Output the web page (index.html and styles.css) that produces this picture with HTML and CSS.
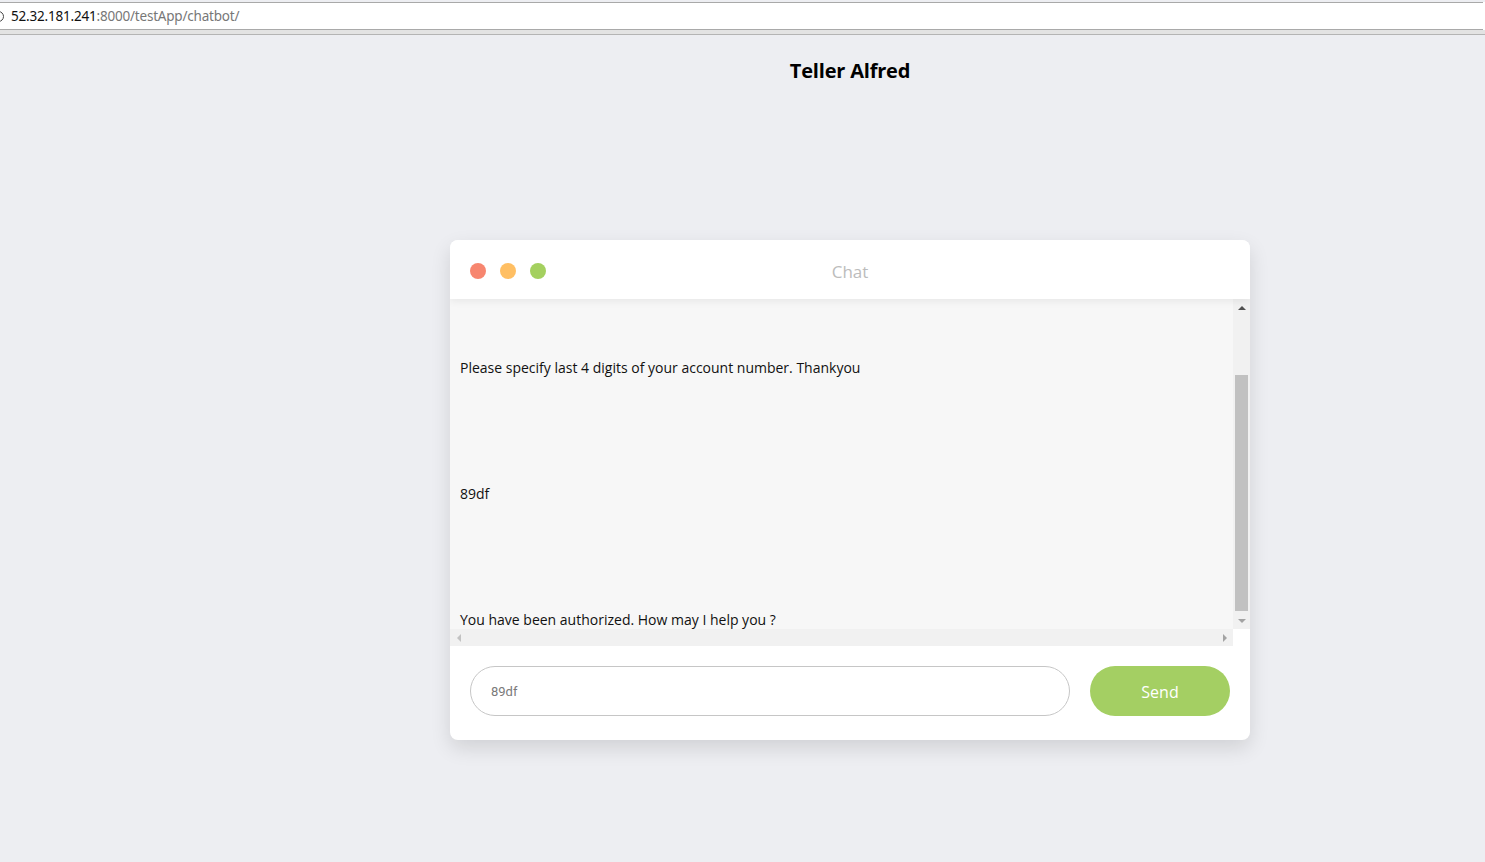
FILE: index.html
```html
<!DOCTYPE html>
<html>
<head>
<meta charset="utf-8">
<title>Teller Alfred</title>
<link rel="stylesheet" href="styles.css">
</head>
<body>
<div class="chrome">
  <div class="addr">
    <span class="info-icon"></span>
    <span class="host">52.32.181.241</span><span class="path">:8000/testApp/chatbot/</span>
  </div>
  <div class="band"></div>
</div>
<main class="page">
  <div class="column">
    <h1 class="title">Teller Alfred</h1>
    <section class="card">
      <header class="card-head">
        <div class="dots">
          <span class="dot red"></span>
          <span class="dot yellow"></span>
          <span class="dot green"></span>
        </div>
        <div class="card-title">Chat</div>
      </header>
      <div class="messages">
        <div class="list">
          <p class="msg first">Please specify last 4 digits of your account number. Thankyou</p>
          <p class="msg">89df</p>
          <p class="msg">You have been authorized. How may I help you ?</p>
        </div>
        <div class="vscroll">
          <div class="sbtn up"><span class="tri-up dark"></span></div>
          <div class="vtrack"><div class="vthumb"></div></div>
          <div class="sbtn"><span class="tri-down"></span></div>
        </div>
        <div class="hscroll">
          <div class="hbtn"><span class="tri-left"></span></div>
          <div class="htrack"></div>
          <div class="hbtn"><span class="tri-right"></span></div>
        </div>
        <div class="corner"></div>
      </div>
      <footer class="card-foot">
        <div class="input">89df</div>
        <button class="send">Send</button>
      </footer>
    </section>
  </div>
</main>
</body>
</html>
```
FILE: styles.css
```css
* { box-sizing: border-box; }
html, body { margin: 0; padding: 0; }
body {
  background: #edeef2;
  font-family: "Open Sans", "Noto Sans", sans-serif;
  width: 1485px;
  height: 862px;
  overflow: hidden;
}
.chrome { background: #fff; }
.addr {
  margin-top: 2px;
  height: 28px;
  border-top: 1px solid #a9a9a9;
  border-bottom: 1px solid #a9a9a9;
  width: 1483px;
  display: flex;
  align-items: center;
  font-family: "Noto Sans", sans-serif;
  font-size: 13.5px;
  padding-left: 11px;
  position: relative;
}
.info-icon {
  position: absolute;
  left: -7px;
  top: 8px;
  width: 11px;
  height: 11px;
  border: 1.3px solid #444;
  border-radius: 50%;
}
.host { color: #111; letter-spacing: -0.2px; }
.path { color: #777; letter-spacing: -0.2px; }
.band {
  height: 5px;
  background: #e3e3e3;
  border-bottom: 1px solid #b4b4b4;
}
.page { padding-left: 450px; }
.column { width: 800px; }
.title {
  margin: 22px 0 0;
  height: 28px;
  line-height: 28px;
  text-align: center;
  font-family: "Open Sans", sans-serif;
  font-weight: 700;
  font-size: 20px;
  color: #000;
  letter-spacing: -0.2px;
}
.card {
  margin-top: 155px;
  width: 800px;
  height: 500px;
  background: #fff;
  border-radius: 8px;
  box-shadow: 0 8px 20px rgba(0,0,0,0.12);
  display: flex;
  flex-direction: column;
  overflow: hidden;
}
.card-head {
  height: 59px;
  display: flex;
  align-items: center;
  padding-left: 20px;
  position: relative;
  box-shadow: 0 2px 8px rgba(0,0,0,0.07);
  z-index: 1;
  background: #fff;
}
.dots { display: flex; gap: 14px; margin-top: 3px; }
.dot { width: 16px; height: 16px; border-radius: 50%; display: block; }
.red { background: #f7866f; }
.yellow { background: #ffbf63; }
.green { background: #a4d05f; }
.card-title {
  position: absolute;
  left: 0; right: 0;
  top: 20px;
  text-align: center;
  color: #bcbcbc;
  font-size: 17px;
  line-height: 24px;
}
.messages {
  height: 347px;
  display: grid;
  grid-template-columns: 783px 17px;
  grid-template-rows: 330px 17px;
  background: #f7f7f7;
}
.list { overflow: hidden; padding: 0 10px; }
.msg {
  margin: 106px 0 0;
  line-height: 20px;
  height: 20px;
  font-family: "Open Sans", sans-serif;
  font-size: 14px;
  color: #111;
  letter-spacing: 0;
}
.msg.first { margin-top: 59px; }
.vscroll {
  background: #f1f1f1;
  display: flex;
  flex-direction: column;
}
.sbtn { height: 17px; display: flex; align-items: center; justify-content: center; }
.vtrack { flex: 1; padding: 59px 2px 1px; }
.vthumb { height: 236px; background: #c1c1c1; }
.hscroll {
  background: #f1f1f1;
  display: flex;
  align-items: center;
}
.hbtn { width: 17px; height: 17px; display: flex; align-items: center; justify-content: center; }
.htrack { flex: 1; }
.corner { background: #fff; }
.tri-up, .tri-down, .tri-left, .tri-right { width: 0; height: 0; display: block; }
.tri-up { border-left: 4px solid transparent; border-right: 4px solid transparent; border-bottom: 4px solid #a3a3a3; }
.tri-up.dark { border-bottom-color: #505050; }
.tri-down { border-left: 4px solid transparent; border-right: 4px solid transparent; border-top: 4px solid #a3a3a3; }
.tri-left { border-top: 4px solid transparent; border-bottom: 4px solid transparent; border-right: 4px solid #c2c2c2; }
.tri-right { border-top: 4px solid transparent; border-bottom: 4px solid transparent; border-left: 4px solid #a3a3a3; }
.card-foot {
  flex: 1;
  display: flex;
  align-items: flex-start;
  padding: 20px 20px 0;
  gap: 20px;
}
.input {
  width: 600px;
  height: 50px;
  border: 1px solid #c6c6c6;
  border-radius: 25px;
  padding-left: 20px;
  display: flex;
  align-items: center;
  font-family: "Roboto", sans-serif;
  font-size: 13px;
  color: #7a7a7a;
}
.send {
  width: 140px;
  height: 50px;
  border: none;
  border-radius: 25px;
  background: #a4cf63;
  color: #fff;
  font-family: "Open Sans", sans-serif;
  font-size: 16px;
  padding: 2px 0 0;
  margin: 0;
}
```
